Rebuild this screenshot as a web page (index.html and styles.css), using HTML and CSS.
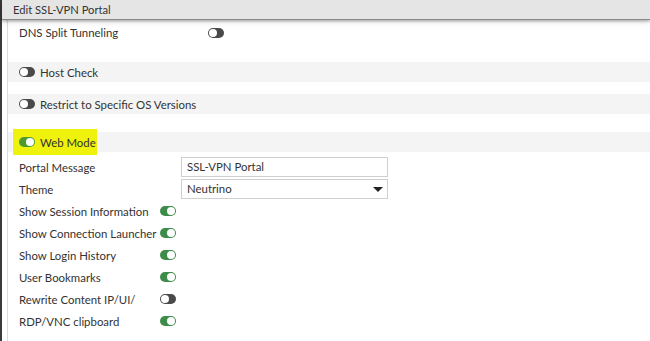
FILE: index.html
```html
<!DOCTYPE html>
<html>
<head>
<meta charset="utf-8">
<link rel="stylesheet" href="styles.css">
</head>
<body>
<div class="frame">
  <div class="header">Edit SSL-VPN Portal</div>
  <div class="body">
    <div class="content">
      <div class="row dns">
        <span class="label dns-label">DNS Split Tunneling</span>
        <span class="toggle off"></span>
      </div>
      <div class="band band-host">
        <span class="toggle off"></span>
        <span class="band-text">Host Check</span>
      </div>
      <div class="band band-os">
        <span class="toggle off"></span>
        <span class="band-text">Restrict to Specific OS Versions</span>
      </div>
      <div class="band band-web">
        <span class="highlight">
          <span class="toggle on web"></span>
          <span class="band-text">Web Mode</span>
        </span>
      </div>
      <div class="field-row first">
        <span class="label field-label">Portal Message</span>
        <span class="input">SSL-VPN Portal</span>
      </div>
      <div class="field-row">
        <span class="label field-label">Theme</span>
        <span class="input select">Neutrino<span class="caret"></span></span>
      </div>
      <div class="opt-row"><span class="label opt-label">Show Session Information</span><span class="toggle on"></span></div>
      <div class="opt-row"><span class="label opt-label">Show Connection Launcher</span><span class="toggle on"></span></div>
      <div class="opt-row"><span class="label opt-label">Show Login History</span><span class="toggle on"></span></div>
      <div class="opt-row"><span class="label opt-label">User Bookmarks</span><span class="toggle on"></span></div>
      <div class="opt-row"><span class="label opt-label">Rewrite Content IP/UI/</span><span class="toggle off"></span></div>
      <div class="opt-row"><span class="label opt-label">RDP/VNC clipboard</span><span class="toggle on"></span></div>
    </div>
  </div>
</div>
</body>
</html>
```

FILE: styles.css
```css
* { box-sizing: border-box; }
html, body {
  margin: 0;
  padding: 0;
  background: #fff;
}
body {
  font-family: Lato, "Open Sans", sans-serif;
  font-size: 11.4px;
  color: #333;
  width: 650px;
  height: 341px;
  overflow: hidden;
}
.label, .band-text, .header, .input {
  white-space: nowrap;
}
.label { flex: none; }
.frame {
  height: 341px;
  border-left: 2px solid #3a3a3a;
  display: flex;
  flex-direction: column;
}
.header {
  height: 20px;
  line-height: 19px;
  background: #e5e5e5;
  padding-left: 11px;
  border-bottom: 1px solid #8a8a8a;
  box-shadow: 0 1px 3px rgba(0,0,0,0.35), 0 3px 6px rgba(0,0,0,0.08);
  position: relative;
  z-index: 1;
  color: #333;
  font-size: 11.2px;
}
.body {
  flex: 1;
  padding-left: 5px;
}
.content {
  height: 100%;
  border-left: 1px solid #dcdcdc;
  display: flex;
  flex-direction: column;
}
.row.dns {
  height: 42px;
  display: flex;
  align-items: flex-start;
  padding-left: 11px;
  padding-top: 6px;
}
.dns-label {
  width: 189px;
  line-height: 14px;
}
.dns .toggle { margin-top: 2px; }
.band {
  height: 20px;
  background: #f4f4f4;
  display: flex;
  align-items: center;
  padding-left: 11px;
  flex: none;
}
.band-os { margin-top: 12px; }
.band-web { margin-top: 18px; padding-left: 5px; }
.band-text { margin-left: 5px; }
.highlight {
  display: flex;
  align-items: center;
  background: #eef20c;
  height: 26px;
  padding: 0 5px 0 6px;
  width: 84px;
  flex: none;
}
.field-row {
  height: 22px;
  display: flex;
  align-items: center;
  padding-left: 11px;
  flex: none;
}
.field-row.first { margin-top: 4px; }
.field-label { width: 162px; }
.input {
  width: 207px;
  height: 20px;
  border: 1px solid #cfcfcf;
  background: #fff;
  padding-left: 5px;
  line-height: 18px;
  display: flex;
  align-items: center;
  justify-content: space-between;
  flex: none;
}
.caret {
  width: 0;
  height: 0;
  border-left: 5px solid transparent;
  border-right: 5px solid transparent;
  border-top: 5px solid #222;
  margin-right: 4px;
}
.opt-row {
  height: 22px;
  display: flex;
  align-items: center;
  padding-left: 11px;
  flex: none;
}
.opt-label { width: 141px; }
.toggle {
  display: inline-block;
  position: relative;
  width: 16px;
  height: 10px;
  border-radius: 5px;
  background: #4a4a4a;
  flex: none;
}
.toggle::after {
  content: "";
  position: absolute;
  top: 1px;
  width: 8px;
  height: 8px;
  border-radius: 50%;
  background: #fff;
}
.toggle.off::after { left: 1px; }
.toggle.on { background: #3d8c4a; }
.toggle.on::after { right: 1px; }
.toggle.web { background: #4f9a2e; }
```
